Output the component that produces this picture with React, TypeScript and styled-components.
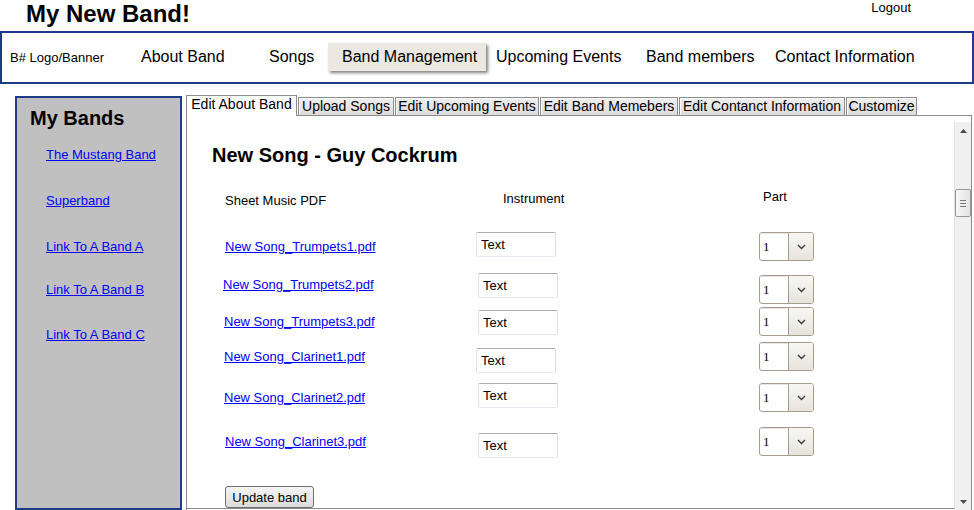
import React from "react";
import styled, { createGlobalStyle } from "styled-components";

const GlobalStyle = createGlobalStyle`
  html, body { margin: 0; padding: 0; background: #fff; }
  body { font-family: "Liberation Sans", Arial, sans-serif; color: #000; overflow: hidden; }
  * { box-sizing: border-box; }
`;

const Page = styled.div`
  width: 974px;
  height: 510px;
  overflow: hidden;
  display: flex;
  flex-direction: column;
`;

const TopBar = styled.header`
  display: flex;
  justify-content: space-between;
  align-items: flex-start;
  height: 31px;
  padding: 0 63px 0 26px;
`;

const SiteTitle = styled.h1`
  margin: 0;
  font-size: 24px;
  line-height: 28px;
  font-weight: bold;
`;

const Logout = styled.a`
  font-size: 13px;
  line-height: 15px;
  color: #000;
  text-decoration: none;
`;

const NavBar = styled.nav`
  height: 53px;
  border: 2px solid #1f3b87;
  display: grid;
  grid-template-columns: 131px 128px 59px 168px 150px 129px auto;
  align-items: baseline;
  padding: 10px 0 0 8px;
`;

const Logo = styled.span`
  font-size: 13px;
  line-height: 15px;
`;

const NavLink = styled.a`
  font-size: 16px;
  line-height: 19px;
  color: #000;
  text-decoration: none;
  white-space: nowrap;
`;

const NavButton = styled.a`
  width: 158px;
  height: 28px;
  padding: 4px 0 0 14px;
  font-size: 16px;
  line-height: 19px;
  color: #000;
  text-decoration: none;
  white-space: nowrap;
  background: #ebe8e1;
  box-shadow: 2px 2px 3px rgba(0, 0, 0, 0.5);
`;

const Main = styled.div`
  display: flex;
  flex: 1;
  margin-top: 11px;
  min-height: 0;
`;

const Sidebar = styled.aside`
  width: 167px;
  margin: 1px 0 0 15px;
  border: 2px solid #1f3b87;
  background: #c0c0c0;
  padding: 8px 0 0 13px;
`;

const SidebarTitle = styled.h2`
  margin: 0;
  font-size: 20px;
  line-height: 24px;
  font-weight: bold;
`;

const SideLink = styled.a<{ $mt: number }>`
  display: block;
  width: fit-content;
  margin: ${(p) => p.$mt}px 0 0 16px;
  font-size: 13px;
  line-height: 15px;
  color: #0000ff;
  text-decoration: underline;
`;

const TabArea = styled.section`
  width: 786px;
  margin-left: 4px;
  display: flex;
  flex-direction: column;
`;

const TabStrip = styled.div`
  display: flex;
  align-items: flex-end;
  gap: 1px;
  height: 20px;
`;

const Tab = styled.div<{ $w: number; $active?: boolean }>`
  width: ${(p) => p.$w}px;
  font-size: 14px;
  line-height: 16px;
  text-align: center;
  white-space: nowrap;
  border: 1px solid #8c8c8c;
  border-bottom: none;
  ${(p) =>
    p.$active
      ? `
    height: 21px;
    padding-bottom: 4px;
    margin-bottom: -1px;
    background: #fff;
    position: relative;
    z-index: 1;
  `
      : `
    height: 18px;
    background: linear-gradient(#efefef, #dcdcdc);
    box-shadow: inset 1px 1px 0 #fafafa;
  `}
`;

const Panel = styled.div`
  flex: 1;
  display: flex;
  align-items: flex-start;
  border: 1px solid #8c8c8c;
  border-bottom: none;
  padding-top: 6px;
  min-height: 0;
`;

const Content = styled.div`
  flex: 1;
  height: 387px;
  overflow: hidden;
  border-bottom: 1px solid #8c8c8c;
`;

const SongTitle = styled.h3`
  margin: 21px 0 0 25px;
  font-size: 20px;
  line-height: 24px;
  font-weight: bold;
`;

const Table = styled.div`
  margin: 21px 0 0 38px;
`;

const TableRow = styled.div<{ $h: number }>`
  display: grid;
  grid-template-columns: 251px 283px auto;
  align-items: start;
  height: ${(p) => p.$h}px;
`;

const HeadCell = styled.div<{ $dy: number; $dx: number }>`
  margin: ${(p) => p.$dy}px 0 0 ${(p) => p.$dx}px;
  font-size: 13px;
  line-height: 15px;
  white-space: nowrap;
`;

const FileLink = styled.a<{ $dy: number; $dx: number }>`
  justify-self: start;
  margin: ${(p) => p.$dy}px 0 0 ${(p) => p.$dx}px;
  font-size: 13px;
  line-height: 15px;
  color: #0000ff;
  text-decoration: underline;
  white-space: nowrap;
`;

const TextBox = styled.input<{ $dy: number; $dx: number }>`
  margin: ${(p) => p.$dy}px 0 0 ${(p) => p.$dx}px;
  width: 80px;
  height: 25px;
  padding: 0 0 0 4px;
  font-family: "Liberation Sans", Arial, sans-serif;
  font-size: 13px;
  color: #000;
  background: #fff;
  border: 1px solid;
  border-color: #abadb3 #dbdfe6 #e3e9ef #e2e3ea;
  border-radius: 2px;
  outline: none;
`;

const PartSelect = styled.div<{ $dy: number }>`
  margin-top: ${(p) => p.$dy}px;
  width: 55px;
  height: 29px;
  display: flex;
  border: 1px solid #a69e8d;
  border-radius: 3px;
  overflow: hidden;
  background: #fff;
`;

const PartValue = styled.span`
  width: 28px;
  padding: 0 0 0 3px;
  display: flex;
  align-items: center;
  font-family: "Liberation Serif", "Times New Roman", serif;
  font-size: 13px;
  box-shadow: inset 0 1px 0 #e6e6e6;
`;

const PartButton = styled.span`
  flex: 1;
  display: flex;
  align-items: center;
  justify-content: center;
  border-left: 1px solid #a69e8d;
  background: linear-gradient(#f7f6f3, #e7e4dc);
`;

const UpdateButton = styled.button`
  width: 89px;
  height: 22px;
  padding: 0;
  font-family: "Liberation Sans", Arial, sans-serif;
  font-size: 13px;
  color: #000;
  border: 1px solid #707070;
  border-radius: 3px;
  background: linear-gradient(#f4f4f4, #dcdcdc);
`;

const ScrollTrack = styled.div`
  width: 17px;
  align-self: stretch;
  display: flex;
  flex-direction: column;
  background: #f0f0f0;
  border-left: 1px solid #e2e2e2;
`;

const ScrollArrow = styled.div<{ $bottom?: boolean }>`
  height: 17px;
  display: flex;
  align-items: center;
  justify-content: center;
  margin-top: ${(p) => (p.$bottom ? "auto" : "0")};
`;

const ScrollThumb = styled.div`
  margin-top: 50px;
  height: 28px;
  border: 1px solid #979797;
  border-radius: 2px;
  background: linear-gradient(to right, #f7f7f7, #e3e3e3);
  display: flex;
  align-items: center;
  justify-content: center;
`;

const Chevron = () => (
  <svg width="9" height="6" viewBox="0 0 9 6">
    <path d="M1 1 L4.5 4.5 L8 1" fill="none" stroke="#3c3c3c" strokeWidth="1.4" />
  </svg>
);

const sideLinks = [
  { t: "The Mustang Band", mt: 17 },
  { t: "Superband", mt: 31 },
  { t: "Link To A Band A", mt: 31 },
  { t: "Link To A Band B", mt: 28 },
  { t: "Link To A Band C", mt: 30 },
];

const tabs = [
  { t: "Edit About Band", w: 111, active: true },
  { t: "Upload Songs", w: 96 },
  { t: "Edit Upcoming Events", w: 144 },
  { t: "Edit Band Memebers", w: 138 },
  { t: "Edit Contanct Information", w: 166 },
  { t: "Customize", w: 71 },
];

const rows = [
  { f: "New Song_Trumpets1.pdf", h: 41, ly: 7, lx: 0, iy: 0, ix: 0, sy: 0 },
  { f: "New Song_Trumpets2.pdf", h: 34, ly: 4, lx: -2, iy: 0, ix: 2, sy: 2 },
  { f: "New Song_Trumpets3.pdf", h: 35, ly: 7, lx: -1, iy: 3, ix: 2, sy: 0 },
  { f: "New Song_Clarinet1.pdf", h: 41, ly: 7, lx: -1, iy: 6, ix: 0, sy: 0 },
  { f: "New Song_Clarinet2.pdf", h: 44, ly: 7, lx: -1, iy: 0, ix: 2, sy: 0 },
  { f: "New Song_Clarinet3.pdf", h: 59, ly: 7, lx: 0, iy: 6, ix: 2, sy: 0 },
];

export default function App() {
  return (
    <Page>
      <GlobalStyle />
      <TopBar>
        <SiteTitle>My New Band!</SiteTitle>
        <Logout href="#">Logout</Logout>
      </TopBar>
      <NavBar>
        <Logo>B# Logo/Banner</Logo>
        <NavLink href="#">About Band</NavLink>
        <NavLink href="#">Songs</NavLink>
        <NavButton href="#">Band Management</NavButton>
        <NavLink href="#">Upcoming Events</NavLink>
        <NavLink href="#">Band members</NavLink>
        <NavLink href="#">Contact Information</NavLink>
      </NavBar>
      <Main>
        <Sidebar>
          <SidebarTitle>My Bands</SidebarTitle>
          {sideLinks.map((l) => (
            <SideLink key={l.t} href="#" $mt={l.mt}>
              {l.t}
            </SideLink>
          ))}
        </Sidebar>
        <TabArea>
          <TabStrip>
            {tabs.map((t) => (
              <Tab key={t.t} $w={t.w} $active={t.active}>
                {t.t}
              </Tab>
            ))}
          </TabStrip>
          <Panel>
            <Content>
              <SongTitle>New Song - Guy Cockrum</SongTitle>
              <Table>
                <TableRow $h={44}>
                  <HeadCell $dy={5} $dx={0}>Sheet Music PDF</HeadCell>
                  <HeadCell $dy={3} $dx={27}>Instrument</HeadCell>
                  <HeadCell $dy={1} $dx={4}>Part</HeadCell>
                </TableRow>
                {rows.map((r) => (
                  <TableRow key={r.f} $h={r.h}>
                    <FileLink href="#" $dy={r.ly} $dx={r.lx}>
                      {r.f}
                    </FileLink>
                    <TextBox $dy={r.iy} $dx={r.ix} defaultValue="Text" />
                    <PartSelect $dy={r.sy}>
                      <PartValue>1</PartValue>
                      <PartButton>
                        <Chevron />
                      </PartButton>
                    </PartSelect>
                  </TableRow>
                ))}
                <UpdateButton>Update band</UpdateButton>
              </Table>
            </Content>
            <ScrollTrack>
              <ScrollArrow>
                <svg width="7" height="4" viewBox="0 0 7 4">
                  <polygon points="0,4 7,4 3.5,0" fill="#4a4a4a" />
                </svg>
              </ScrollArrow>
              <ScrollThumb>
                <svg width="6" height="7" viewBox="0 0 6 7">
                  <path d="M0 0.5 H6 M0 3.5 H6 M0 6.5 H6" stroke="#777" strokeWidth="1" />
                </svg>
              </ScrollThumb>
              <ScrollArrow $bottom>
                <svg width="7" height="4" viewBox="0 0 7 4">
                  <polygon points="0,0 7,0 3.5,4" fill="#4a4a4a" />
                </svg>
              </ScrollArrow>
            </ScrollTrack>
          </Panel>
        </TabArea>
      </Main>
    </Page>
  );
}
